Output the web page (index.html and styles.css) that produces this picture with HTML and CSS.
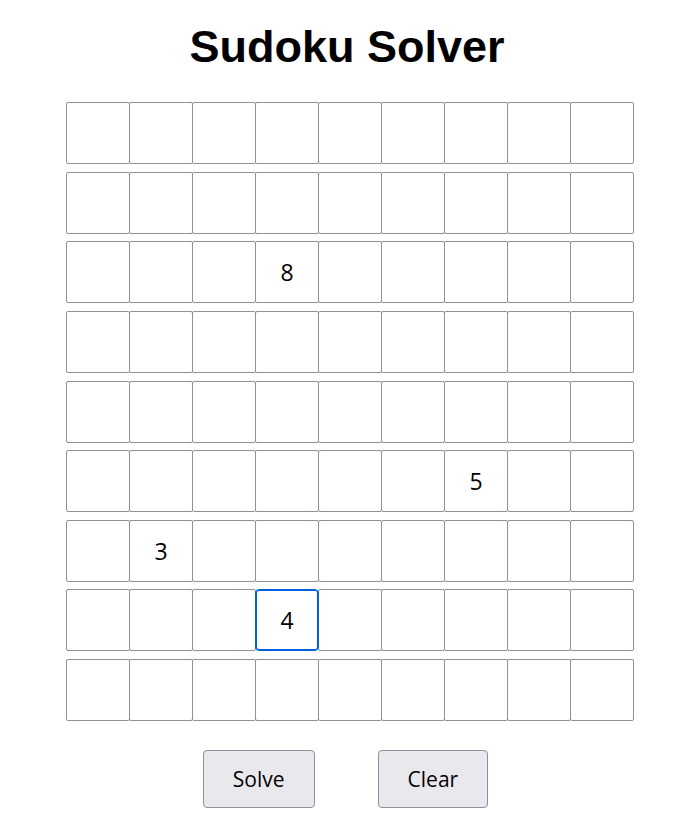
FILE: index.html
```html
<!DOCTYPE html>
<html lang="en">
<head>
<meta charset="utf-8">
<title>Sudoku Solver</title>
<link rel="stylesheet" href="styles.css">
</head>
<body>
<div class="app">
  <h1 class="title">Sudoku Solver</h1>
  <div class="board">
    <div class="row"><input class="cell" maxlength="1" value=""><input class="cell" maxlength="1" value=""><input class="cell" maxlength="1" value=""><input class="cell" maxlength="1" value=""><input class="cell" maxlength="1" value=""><input class="cell" maxlength="1" value=""><input class="cell" maxlength="1" value=""><input class="cell" maxlength="1" value=""><input class="cell" maxlength="1" value=""></div>
    <div class="row"><input class="cell" maxlength="1" value=""><input class="cell" maxlength="1" value=""><input class="cell" maxlength="1" value=""><input class="cell" maxlength="1" value=""><input class="cell" maxlength="1" value=""><input class="cell" maxlength="1" value=""><input class="cell" maxlength="1" value=""><input class="cell" maxlength="1" value=""><input class="cell" maxlength="1" value=""></div>
    <div class="row"><input class="cell" maxlength="1" value=""><input class="cell" maxlength="1" value=""><input class="cell" maxlength="1" value=""><input class="cell" maxlength="1" value="8"><input class="cell" maxlength="1" value=""><input class="cell" maxlength="1" value=""><input class="cell" maxlength="1" value=""><input class="cell" maxlength="1" value=""><input class="cell" maxlength="1" value=""></div>
    <div class="row"><input class="cell" maxlength="1" value=""><input class="cell" maxlength="1" value=""><input class="cell" maxlength="1" value=""><input class="cell" maxlength="1" value=""><input class="cell" maxlength="1" value=""><input class="cell" maxlength="1" value=""><input class="cell" maxlength="1" value=""><input class="cell" maxlength="1" value=""><input class="cell" maxlength="1" value=""></div>
    <div class="row"><input class="cell" maxlength="1" value=""><input class="cell" maxlength="1" value=""><input class="cell" maxlength="1" value=""><input class="cell" maxlength="1" value=""><input class="cell" maxlength="1" value=""><input class="cell" maxlength="1" value=""><input class="cell" maxlength="1" value=""><input class="cell" maxlength="1" value=""><input class="cell" maxlength="1" value=""></div>
    <div class="row"><input class="cell" maxlength="1" value=""><input class="cell" maxlength="1" value=""><input class="cell" maxlength="1" value=""><input class="cell" maxlength="1" value=""><input class="cell" maxlength="1" value=""><input class="cell" maxlength="1" value=""><input class="cell" maxlength="1" value="5"><input class="cell" maxlength="1" value=""><input class="cell" maxlength="1" value=""></div>
    <div class="row"><input class="cell" maxlength="1" value=""><input class="cell" maxlength="1" value="3"><input class="cell" maxlength="1" value=""><input class="cell" maxlength="1" value=""><input class="cell" maxlength="1" value=""><input class="cell" maxlength="1" value=""><input class="cell" maxlength="1" value=""><input class="cell" maxlength="1" value=""><input class="cell" maxlength="1" value=""></div>
    <div class="row"><input class="cell" maxlength="1" value=""><input class="cell" maxlength="1" value=""><input class="cell" maxlength="1" value=""><input class="cell cell-focus" maxlength="1" value="4"><input class="cell" maxlength="1" value=""><input class="cell" maxlength="1" value=""><input class="cell" maxlength="1" value=""><input class="cell" maxlength="1" value=""><input class="cell" maxlength="1" value=""></div>
    <div class="row"><input class="cell" maxlength="1" value=""><input class="cell" maxlength="1" value=""><input class="cell" maxlength="1" value=""><input class="cell" maxlength="1" value=""><input class="cell" maxlength="1" value=""><input class="cell" maxlength="1" value=""><input class="cell" maxlength="1" value=""><input class="cell" maxlength="1" value=""><input class="cell" maxlength="1" value=""></div>
  </div>
  <div class="actions">
    <button class="btn" type="button">Solve</button>
    <button class="btn" type="button">Clear</button>
  </div>
</div>
</body>
</html>
```

FILE: styles.css
```css
html, body {
  margin: 0;
  padding: 0;
  background: #ffffff;
}

body {
  font-family: "Liberation Sans", Arial, sans-serif;
  color: #000000;
}

.app {
  display: flex;
  flex-direction: column;
  align-items: center;
}

.title {
  font-family: "Liberation Sans", Arial, sans-serif;
  font-weight: bold;
  font-size: 45px;
  line-height: 50px;
  margin: 22px 0 30px 6px;
}

.board {
  display: flex;
  flex-direction: column;
  gap: 7.625px;
  padding-left: 12px;
}

.row {
  display: flex;
}

.cell {
  box-sizing: border-box;
  width: 64px;
  height: 62px;
  margin: 0 0 0 -1px;
  padding: 0;
  border: 1px solid #8f8f9d;
  border-radius: 2px;
  background: transparent;
  text-align: center;
  font-family: "Open Sans", sans-serif;
  font-size: 23px;
  color: #000000;
  outline: none;
}

.row .cell:first-child {
  margin-left: 0;
}

.cell-focus {
  position: relative;
  border-color: #0060df;
  border-radius: 4px;
  box-shadow: inset 0 0 0 1px #0060df;
}

.actions {
  display: flex;
  gap: 63px;
  margin-top: 29px;
  padding-left: 3px;
}

.btn {
  box-sizing: border-box;
  height: 58px;
  padding: 0 29px;
  background: #e9e9ed;
  border: 1px solid #8f8f9d;
  border-radius: 4px;
  font-family: "Open Sans", sans-serif;
  font-size: 21px;
  color: #000000;
}
```
